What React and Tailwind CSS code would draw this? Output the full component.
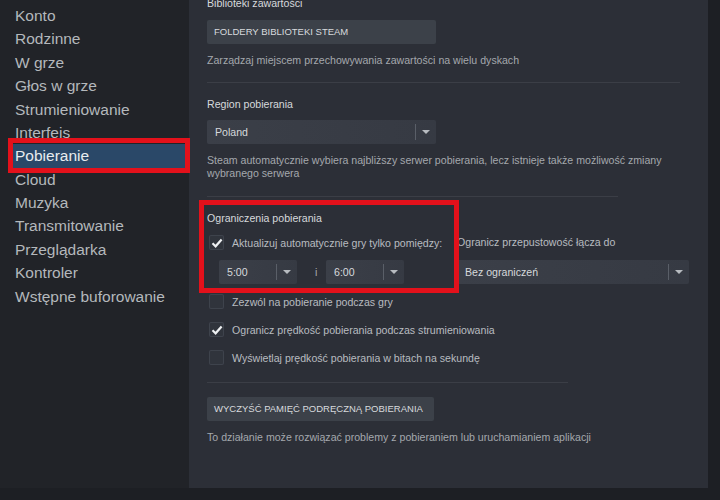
const font = { fontFamily: '"Liberation Sans", Arial, sans-serif' }

const nav = ['Konto', 'Rodzinne', 'W grze', 'Głos w grze', 'Strumieniowanie', 'Interfejs', 'Pobieranie', 'Cloud', 'Muzyka', 'Transmitowanie', 'Przeglądarka', 'Kontroler', 'Wstępne buforowanie']

function Check({ on }) {
  return (
    <div className="flex h-[15px] w-[15px] shrink-0 items-center justify-center rounded-[2px] bg-[#30343c] shadow-[inset_0_0_0_1px_#3e434c]">
      {on && (
        <svg width="12" height="12" viewBox="0 0 12 12">
          <path d="M1.5 6.3 L4.6 9.3 L10.6 2.6" fill="none" stroke="#eef0f2" strokeWidth="2.2" />
        </svg>
      )}
    </div>
  )
}

function Select({ value, className }) {
  return (
    <div className={'flex h-6 items-center rounded-[2px] bg-gradient-to-r from-[#3b3f48] to-[#363a43] ' + className}>
      <span className="flex-1 pl-[8px] text-[10.6px] text-[#d6d9dc]">{value}</span>
      <span className="h-[16px] w-px bg-[#5a5f68]" />
      <span className="flex w-[20px] justify-center">
        <svg width="8" height="5" viewBox="0 0 8 5"><path d="M0 0h8L4 4z" fill="#b7bbc0" /></svg>
      </span>
    </div>
  )
}

function Button({ children, className }) {
  return (
    <div className={'flex h-6 items-center whitespace-nowrap rounded-[2px] bg-[#3c4149] pl-[7px] text-[9.5px] text-[#d8dbde] ' + className}>
      {children}
    </div>
  )
}

export default function App() {
  return (
    <div className="relative flex h-[500px] w-[720px] overflow-hidden bg-[#1d1f24]" style={font}>
      <div className="flex h-[488px] w-[189px] shrink-0 flex-col bg-[#212328] pl-[13px] pt-[4px]">
        {nav.map(n => (
          <div key={n} className={'flex h-[23.4px] items-center pl-[2px] text-[15.5px] leading-none ' + (n === 'Pobieranie' ? 'mr-[4px] bg-[#2a4868] text-[#e8ecef]' : 'text-[#b4b8bc]')}>
            {n}
          </div>
        ))}
      </div>
      <div className="flex h-[488px] w-[519px] flex-col bg-[#2c2f37] pl-[18px] text-[10.6px] leading-[14px] text-[#c3c6ca]">
        <div className="-mt-[4px] text-[#d6d9dc]">Biblioteki zawartości</div>
        <Button className="mt-[10px] w-[229px]">FOLDERY BIBLIOTEKI STEAM</Button>
        <div className="mt-[9px] text-[#a4a8ad]">Zarządzaj miejscem przechowywania zawartości na wielu dyskach</div>
        <div className="mt-[15px] mr-[28px] h-px bg-[#3b3e46]" />
        <div className="mt-[14px] text-[#d6d9dc]">Region pobierania</div>
        <Select value="Poland" className="mt-[9px] w-[229px]" />
        <div className="mt-[10px] mr-[40px] leading-[13px] text-[#a4a8ad]">Steam automatycznie wybiera najbliższy serwer pobierania, lecz istnieje także możliwość zmiany wybranego serwera</div>
        <div className="mt-[16px] mr-[90px] h-px bg-[#3b3e46]" />
        <div className="mt-[14px] text-[#d6d9dc]">Ograniczenia pobierania</div>
        <div className="mt-[10px] flex">
          <div className="w-[250px]">
            <div className="flex items-center gap-[8px] pl-[2px]">
              <Check on />
              <span className="text-[#b8bcc0]">Aktualizuj automatycznie gry tylko pomiędzy:</span>
            </div>
            <div className="mt-[10px] flex items-center pl-[12px]">
              <Select value="5:00" className="w-[78px]" />
              <span className="w-[29px] pl-[18px] text-[#a4a8ad]">i</span>
              <Select value="6:00" className="w-[78px]" />
            </div>
          </div>
          <div className="w-[232px]">
            <div className="text-[#b8bcc0]">Ogranicz przepustowość łącza do</div>
            <Select value="Bez ograniczeń" className="mt-[11px] w-[232px]" />
          </div>
        </div>
        <div className="mt-[10px] flex flex-col gap-[13px] pl-[2px] text-[#b8bcc0]">
          <div className="flex items-center gap-[8px]"><Check /><span>Zezwól na pobieranie podczas gry</span></div>
          <div className="flex items-center gap-[8px]"><Check on /><span>Ogranicz prędkość pobierania podczas strumieniowania</span></div>
          <div className="flex items-center gap-[8px]"><Check /><span>Wyświetlaj prędkość pobierania w bitach na sekundę</span></div>
        </div>
        <div className="mt-[17px] mr-[140px] h-px bg-[#3b3e46]" />
        <Button className="mt-[14px] w-[227px]">WYCZYŚĆ PAMIĘĆ PODRĘCZNĄ POBIERANIA</Button>
        <div className="mt-[9px] text-[#a4a8ad]">To działanie może rozwiązać problemy z pobieraniem lub uruchamianiem aplikacji</div>
      </div>
      <div className="pointer-events-none absolute left-[8px] top-[138px] h-[35px] w-[182px] border-[5px] border-[#e3111b]" />
      <div className="pointer-events-none absolute left-[199px] top-[200px] h-[93px] w-[260px] border-[5px] border-[#e3111b]" />
    </div>
  )
}
